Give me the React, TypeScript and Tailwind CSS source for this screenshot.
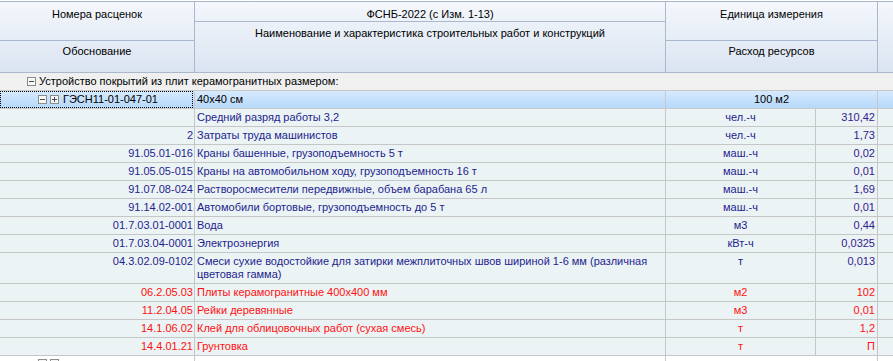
import React from "react";

type Row = {
  code: string;
  name: React.ReactNode;
  unit: string;
  value: string;
  red?: boolean;
  tall?: boolean;
};

const rows: Row[] = [
  { code: "", name: "Средний разряд работы 3,2", unit: "чел.-ч", value: "310,42" },
  { code: "2", name: "Затраты труда машинистов", unit: "чел.-ч", value: "1,73" },
  { code: "91.05.01-016", name: "Краны башенные, грузоподъемность 5 т", unit: "маш.-ч", value: "0,02" },
  { code: "91.05.05-015", name: "Краны на автомобильном ходу, грузоподъемность 16 т", unit: "маш.-ч", value: "0,01" },
  { code: "91.07.08-024", name: "Растворосмесители передвижные, объем барабана 65 л", unit: "маш.-ч", value: "1,69" },
  { code: "91.14.02-001", name: "Автомобили бортовые, грузоподъемность до 5 т", unit: "маш.-ч", value: "0,01" },
  { code: "01.7.03.01-0001", name: "Вода", unit: "м3", value: "0,44" },
  { code: "01.7.03.04-0001", name: "Электроэнергия", unit: "кВт-ч", value: "0,0325" },
  {
    code: "04.3.02.09-0102",
    name: (
      <>
        Смеси сухие водостойкие для затирки межплиточных швов шириной 1-6 мм (различная
        <br />
        цветовая гамма)
      </>
    ),
    unit: "т",
    value: "0,013",
    tall: true,
  },
  { code: "06.2.05.03", name: "Плиты керамогранитные 400x400 мм", unit: "м2", value: "102", red: true },
  { code: "11.2.04.05", name: "Рейки деревянные", unit: "м3", value: "0,01", red: true },
  { code: "14.1.06.02", name: "Клей для облицовочных работ (сухая смесь)", unit: "т", value: "1,2", red: true },
  { code: "14.4.01.21", name: "Грунтовка", unit: "т", value: "П", red: true },
];

function Box({ plus }: { plus?: boolean }) {
  return (
    <span className="relative inline-block w-[9px] h-[9px] border border-[#8c8c8c] bg-[#f7f7f7] shrink-0">
      <span className="absolute left-[1px] top-[3px] w-[5px] h-px bg-[#4a4a4a]" />
      {plus && <span className="absolute left-[3px] top-[1px] w-px h-[5px] bg-[#4a4a4a]" />}
    </span>
  );
}

export default function App() {
  return (
    <div
      className="w-[893px] h-[361px] overflow-hidden bg-white text-[11px] leading-[13px]"
      style={{ fontFamily: "'Liberation Sans', Arial, sans-serif" }}
    >
      <div className="h-px bg-white" />
      {/* Header */}
      <div className="flex h-[72px] border-y border-[#a9b8cc] bg-gradient-to-b from-[#f4f7fc] to-[#dae4f1] text-black">
        <div className="w-[195px] shrink-0 flex flex-col border-r border-[#a9b8cc]">
          <div className="h-[39px] border-b border-[#a9b8cc] flex justify-center pt-[6px]">Номера расценок</div>
          <div className="flex-1 flex justify-center pt-[4px]">Обоснование</div>
        </div>
        <div className="w-[471px] shrink-0 flex flex-col border-r border-[#a9b8cc]">
          <div className="h-[20px] border-b border-[#a9b8cc] flex justify-center pt-[6px]">ФСНБ-2022 (с Изм. 1-13)</div>
          <div className="flex-1 flex justify-center pt-[5px]">
            Наименование и характеристика строительных работ и конструкций
          </div>
        </div>
        <div className="w-[212px] shrink-0 flex flex-col border-r border-[#a9b8cc]">
          <div className="h-[39px] border-b border-[#a9b8cc] flex justify-center pt-[6px]">Единица измерения</div>
          <div className="flex-1 flex justify-center pt-[4px]">Расход ресурсов</div>
        </div>
        <div className="flex-1" />
      </div>

      {/* Group row */}
      <div className="flex h-[18px] bg-[#f0f0f0] border-b border-[#c8c8c8] items-center text-black">
        <div className="pl-[27px] flex items-center gap-[3px]">
          <Box />
          <span>Устройство покрытий из плит керамогранитных размером:</span>
        </div>
      </div>

      {/* Selected row */}
      <div className="flex h-[18px] border-b border-[#c8c8c8] bg-gradient-to-b from-[#d6eafd] to-[#b6d8fa] text-black">
        <div className="w-[195px] shrink-0 border-r border-[#c8c8c8] relative flex items-center pl-[38px] gap-[3px]">
          <div className="absolute inset-0 right-[1px] border border-dotted border-black" />
          <Box />
          <Box plus />
          <span className="ml-[1px]">ГЭСН11-01-047-01</span>
        </div>
        <div className="w-[471px] shrink-0 border-r border-[#c8c8c8] flex items-center pl-[2px]">40x40 см</div>
        <div className="w-[212px] shrink-0 border-r border-[#c8c8c8] flex items-center justify-center">100 м2</div>
        <div className="flex-1" />
      </div>

      {/* Data rows */}
      {rows.map((r, i) => {
        const color = r.red ? "text-[#ff1010]" : "text-[#1e1e8e]";
        const valColor = r.red ? "text-[#ff1010]" : "text-[#33208e]";
        return (
          <div
            key={i}
            className={`flex ${r.tall ? "h-[31px]" : "h-[18px]"} border-b border-[#c6c6c6] bg-[#ebf3f5] ${color}`}
          >
            <div className="w-[195px] shrink-0 border-r border-[#c6c6c6] text-right pr-px pt-[2px]">{r.code}</div>
            <div className="w-[471px] shrink-0 border-r border-[#c6c6c6] pl-[2px] pt-[2px]">{r.name}</div>
            <div className="w-[150px] shrink-0 border-r border-[#c6c6c6] text-center pt-[2px]">{r.unit}</div>
            <div className={`w-[62px] shrink-0 border-r border-[#c6c6c6] text-right pr-[2px] pt-[2px] ${valColor}`}>
              {r.value}
            </div>
            <div className="flex-1" />
          </div>
        );
      })}

      {/* Partial next row */}
      <div className="flex h-[18px] bg-white">
        <div className="w-[195px] shrink-0 border-r border-[#c6c6c6] flex items-start pt-[3px] pl-[38px] gap-[3px]">
          <Box />
          <Box plus />
        </div>
        <div className="w-[471px] shrink-0 border-r border-[#c6c6c6]" />
        <div className="w-[212px] shrink-0 border-r border-[#c6c6c6]" />
        <div className="flex-1" />
      </div>
    </div>
  );
}
